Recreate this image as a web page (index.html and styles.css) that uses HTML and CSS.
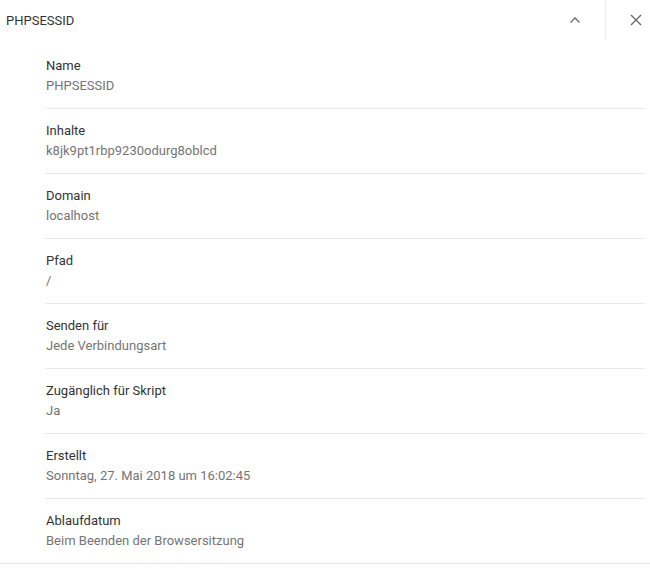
FILE: index.html
```html
<!DOCTYPE html>
<html lang="de">
<head>
<meta charset="utf-8">
<title>PHPSESSID</title>
<link rel="stylesheet" href="styles.css">
</head>
<body>
<div class="panel">
  <div class="header">
    <div class="title">PHPSESSID</div>
    <button class="btn collapse" aria-label="Einklappen">
      <svg width="12" height="8" viewBox="0 0 12 8"><path d="M1.5 6.5 L6 2 L10.5 6.5" fill="none" stroke="#6b6b6b" stroke-width="1.4"/></svg>
    </button>
    <div class="vsep"></div>
    <button class="btn close" aria-label="Schließen">
      <svg width="12" height="12" viewBox="0 0 12 12"><path d="M1 1 L11 11 M11 1 L1 11" fill="none" stroke="#6b6b6b" stroke-width="1.4"/></svg>
    </button>
  </div>
  <div class="list">
    <div class="row"><div class="label">Name</div><div class="value">PHPSESSID</div></div>
    <div class="row"><div class="label">Inhalte</div><div class="value">k8jk9pt1rbp9230odurg8oblcd</div></div>
    <div class="row"><div class="label">Domain</div><div class="value">localhost</div></div>
    <div class="row"><div class="label">Pfad</div><div class="value">/</div></div>
    <div class="row"><div class="label">Senden für</div><div class="value">Jede Verbindungsart</div></div>
    <div class="row"><div class="label">Zugänglich für Skript</div><div class="value">Ja</div></div>
    <div class="row"><div class="label">Erstellt</div><div class="value">Sonntag, 27. Mai 2018 um 16:02:45</div></div>
    <div class="row last"><div class="label">Ablaufdatum</div><div class="value">Beim Beenden der Browsersitzung</div></div>
  </div>
</div>
</body>
</html>
```
FILE: styles.css
```css
html, body {
  margin: 0;
  padding: 0;
  background: #ffffff;
}
body {
  font-family: Roboto, "Liberation Sans", Arial, sans-serif;
  font-size: 13px;
  color: #333333;
}
.panel {
  width: 650px;
  border-bottom: 1px solid #e6e6e6;
}
.header {
  display: flex;
  align-items: center;
  height: 40px;
}
.title {
  flex: 1;
  padding-left: 6px;
  color: #333333;
}
.btn {
  border: 0;
  background: none;
  padding: 0;
  display: flex;
  align-items: center;
  justify-content: center;
}
.collapse {
  width: 30px;
  height: 40px;
  margin-right: 15px;
}
.vsep {
  width: 1px;
  height: 40px;
  background: #ececec;
  align-self: flex-start;
}
.close {
  width: 44px;
  height: 40px;
  justify-content: flex-end;
  padding-right: 8px;
}
.list {
  padding-top: 4px;
}
.row {
  margin-left: 45px;
  margin-right: 5px;
  padding: 12px 0 12px 1px;
  border-bottom: 1px solid #e8e8e8;
  line-height: 20px;
}
.row.last {
  border-bottom: 0;
}
.label {
  color: #333333;
}
.value {
  color: #757575;
}
```
